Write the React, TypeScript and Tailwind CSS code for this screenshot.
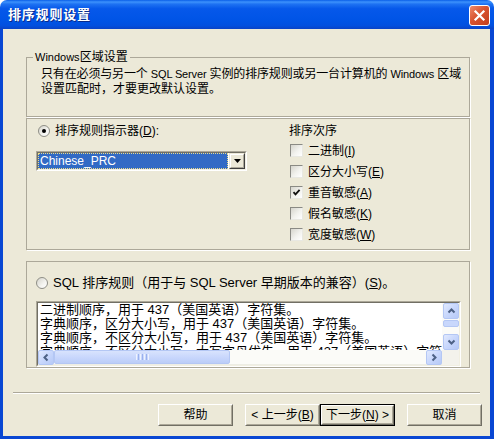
import React from "react";

function U({ c }: { c: string }) {
  return <span className="underline underline-offset-[1px]">{c}</span>;
}

function Radio({ checked }: { checked?: boolean }) {
  return (
    <div className="w-[12px] h-[12px] rounded-full border border-[#8E8E86] bg-[linear-gradient(135deg,#D4D3CB_0%,#F4F4F0_60%,#FFFFFF_100%)] flex items-center justify-center shrink-0">
      {checked ? <div className="w-[4px] h-[4px] rounded-full bg-black" /> : null}
    </div>
  );
}

function Check({ checked }: { checked?: boolean }) {
  return (
    <div className="w-[13px] h-[13px] border border-t-[#8A8A84] border-l-[#8A8A84] border-r-[#E8E8E2] border-b-[#E8E8E2] bg-[linear-gradient(135deg,#D6D5CD_0%,#F2F2EE_55%,#FFFFFF_100%)] shrink-0 flex items-center justify-center">
      {checked ? (
        <svg width="9" height="9" viewBox="0 0 9 9">
          <path d="M1.5 4.2 L3.5 6.4 L7.6 1.8" stroke="#111" strokeWidth="1.8" fill="none" />
        </svg>
      ) : null}
    </div>
  );
}

function Btn({ children, def }: { children: React.ReactNode; def?: boolean }) {
  return (
    <div className={def ? "w-[75px] h-[22px] border border-black" : "w-[75px] h-[22px]"}>
      <div className="w-full h-full border border-t-white border-l-white border-r-[#716F64] border-b-[#716F64]">
        <div className="w-full h-full border border-t-[#ECE9D8] border-l-[#ECE9D8] border-r-[#ACA899] border-b-[#ACA899] bg-[#ECE9D8] flex items-center justify-center text-[12px] leading-[14px]">
          {children}
        </div>
      </div>
    </div>
  );
}

function SArrow({ dir, w, h }: { dir: "up" | "down" | "left" | "right"; w: number; h: number }) {
  const d =
    dir === "up"
      ? "M1.5 5.5 L4.5 2.5 L7.5 5.5"
      : dir === "down"
      ? "M1.5 2.5 L4.5 5.5 L7.5 2.5"
      : dir === "left"
      ? "M5.5 1.5 L2.5 4.5 L5.5 7.5"
      : "M2.5 1.5 L5.5 4.5 L2.5 7.5";
  return (
    <div
      className="rounded-[2px] border border-[#B4C7F4] bg-[linear-gradient(135deg,#E1E9FE_0%,#C8D7FC_50%,#B6C9F7_100%)] flex items-center justify-center shrink-0"
      style={{ width: w, height: h }}
    >
      <svg width="9" height="9" viewBox="0 0 9 9">
        <path d={d} stroke="#4D6185" strokeWidth="2" fill="none" />
      </svg>
    </div>
  );
}

export default function App() {
  const lines = [
    "二进制顺序，用于 437（美国英语）字符集。",
    "字典顺序，区分大小写，用于 437（美国英语）字符集。",
    "字典顺序，不区分大小写，用于 437（美国英语）字符集。",
    "字典顺序，不区分大小写，大写字母优先，用于 437（美国英语）字符集。",
  ];
  return (
    <div className="w-[494px] h-[439px] flex flex-col [font-family:'Liberation_Sans','Noto_Sans_CJK_SC',sans-serif] text-[12px] leading-[14px] text-black select-none">
      {/* title bar */}
      <div className="h-[29px] shrink-0 rounded-t-[7px] bg-[linear-gradient(180deg,#0A5FE8_0%,#3D92FC_7%,#1E72F2_14%,#0658EA_30%,#0054E6_70%,#0250DF_88%,#0A43C6_100%)] flex items-center pl-[8px] pr-[4px] pt-[1px]">
        <div className="text-white font-bold text-[13px] leading-[16px] tracking-[0.8px] [text-shadow:1px_1px_0_#0A2A8A]">
          排序规则设置
        </div>
        <div className="ml-auto mt-[1px] w-[21px] h-[21px] rounded-[3px] border border-white bg-[linear-gradient(135deg,#EE8A6A_0%,#D8532F_45%,#C23E1C_100%)] flex items-center justify-center">
          <svg width="13" height="13" viewBox="0 0 13 13">
            <path d="M2.5 2.5 L10.5 10.5 M10.5 2.5 L2.5 10.5" stroke="#fff" strokeWidth="2.2" strokeLinecap="square" />
          </svg>
        </div>
      </div>

      {/* body */}
      <div className="flex-1 bg-[#ECE9D8] border-l-[3px] border-r-[4px] border-b-[3px] border-[#0947D3] flex flex-col">
        {/* group 1 */}
        <fieldset className="mt-[21px] ml-[23px] w-[444px] border border-[#ACA899] shadow-[1px_1px_0_#fff] pl-[6px] pr-0 pt-[3px] pb-[19px] m-0">
          <legend className="px-[2px] leading-[14px]">
            <span className="text-[11px]">Windows</span>区域设置
          </legend>
          <div className="ml-[8px] leading-[15px] whitespace-nowrap">
            <div className="tracking-[-0.15px]">
              只有在必须与另一个 <span className="text-[11px]">SQL Server</span> 实例的排序规则或另一台计算机的{" "}
              <span className="text-[11px]">Windows</span> 区域
            </div>
            <div>设置匹配时，才要更改默认设置。</div>
          </div>
        </fieldset>

        {/* group 2 */}
        <div className="mt-[1px] ml-[23px] w-[444px] h-[132px] border border-[#ACA899] shadow-[1px_1px_0_#fff] flex pt-[4px] pl-[9px]">
          <div className="w-[253px] flex flex-col">
            <div className="h-[16px] flex items-center gap-[5px] pl-[2px]">
              <Radio checked />
              <span>
                排序规则指示器(<U c="D" />):
              </span>
            </div>
            <div className="mt-[12px] w-[211px] h-[20px] border border-t-[#ACA899] border-l-[#ACA899] border-r-white border-b-white">
              <div className="w-full h-full border border-t-[#716F64] border-l-[#716F64] border-r-[#F1EFE2] border-b-[#F1EFE2] bg-white flex">
                <div className="flex-1 mr-[1px] bg-[#316AC5] text-white border border-dotted border-[#E9DC8A] leading-[14px] pl-[1px]">
                  Chinese_PRC
                </div>
                <div className="w-[16px] h-full border border-t-[#ECE9D8] border-l-[#ECE9D8] border-r-[#404040] border-b-[#404040]">
                  <div className="w-full h-full border border-t-white border-l-white border-r-[#ACA899] border-b-[#ACA899] bg-[#ECE9D8] flex items-center justify-center">
                    <svg width="7" height="4" viewBox="0 0 7 4">
                      <polygon points="0,0 7,0 3.5,4" fill="#000" />
                    </svg>
                  </div>
                </div>
              </div>
            </div>
          </div>
          <div className="flex flex-col">
            <div className="h-[16px] flex items-center">排序次序</div>
            <div className="mt-[1px] flex flex-col">
              {[
                ["二进制", "I", false],
                ["区分大小写", "E", false],
                ["重音敏感", "A", true],
                ["假名敏感", "K", false],
                ["宽度敏感", "W", false],
              ].map(([t, k, c]) => (
                <div key={t as string} className="h-[21px] flex items-center gap-[5px] pl-[1px]">
                  <Check checked={c as boolean} />
                  <span>
                    {t as string}(<U c={k as string} />)
                  </span>
                </div>
              ))}
            </div>
          </div>
        </div>

        {/* group 3 */}
        <div className="mt-[11px] ml-[23px] w-[444px] h-[107px] border border-[#ACA899] shadow-[1px_1px_0_#fff] flex flex-col pt-[13px] pl-[9px]">
          <div className="h-[16px] flex items-center gap-[5px] text-[13px]">
            <Radio />
            <span className="whitespace-nowrap">
              SQL 排序规则（用于与 SQL Server 早期版本的兼容）(<U c="S" />)。
            </span>
          </div>
          <div className="mt-[10px] w-[425px] h-[66px] border border-t-[#ACA899] border-l-[#ACA899] border-r-white border-b-white">
            <div className="w-full h-full border border-t-[#716F64] border-l-[#716F64] border-r-[#F1EFE2] border-b-[#F1EFE2] bg-white grid grid-cols-[1fr_17px] grid-rows-[1fr_15px]">
              <div className="overflow-hidden pl-[2px] text-[13px] leading-[14px] whitespace-nowrap">
                {lines.map((l) => (
                  <div key={l}>{l}</div>
                ))}
              </div>
              <div className="flex flex-col bg-[#FBFBF8] pl-[1px]">
                <SArrow dir="up" w={16} h={16} />
                <div className="mt-[1px] h-[7px] rounded-[2px] border border-[#B4C7F4] bg-[#C8D7FC]" />
                <div className="flex-1" />
                <SArrow dir="down" w={16} h={16} />
              </div>
              <div className="flex bg-[#FBFBF8] border-b border-[#EDEDE5]">
                <SArrow dir="left" w={16} h={15} />
                <div className="w-[176px] h-full rounded-[2px] border border-[#B4C7F4] bg-[linear-gradient(180deg,#D8E3FD_0%,#C6D5FC_60%,#BBCDF8_100%)] flex items-center justify-center gap-[1px]">
                  <div className="w-[1px] h-[6px] bg-[#EEF3FE]" />
                  <div className="w-[1px] h-[6px] bg-[#9AB2EE]" />
                  <div className="w-[1px] h-[6px] bg-[#EEF3FE]" />
                  <div className="w-[1px] h-[6px] bg-[#9AB2EE]" />
                  <div className="w-[1px] h-[6px] bg-[#EEF3FE]" />
                  <div className="w-[1px] h-[6px] bg-[#9AB2EE]" />
                  <div className="w-[1px] h-[6px] bg-[#EEF3FE]" />
                </div>
                <div className="flex-1" />
                <SArrow dir="right" w={16} h={15} />
              </div>
              <div className="bg-[#F3F2EC]" />
            </div>
          </div>
        </div>

        {/* separator */}
        <div className="mt-[24px] ml-[10px] w-[467px] h-0 border-t border-t-[#ACA899] border-b border-b-white" />

        {/* buttons */}
        <div className="mt-[10px] flex justify-end pr-[8px]">
          <Btn>帮助</Btn>
          <div className="w-[12px]" />
          <Btn>
            &lt; 上一步(<U c="B" />)
          </Btn>
          <Btn def>
            下一步(<U c="N" />) &gt;
          </Btn>
          <div className="w-[12px]" />
          <Btn>取消</Btn>
        </div>
      </div>
    </div>
  );
}
